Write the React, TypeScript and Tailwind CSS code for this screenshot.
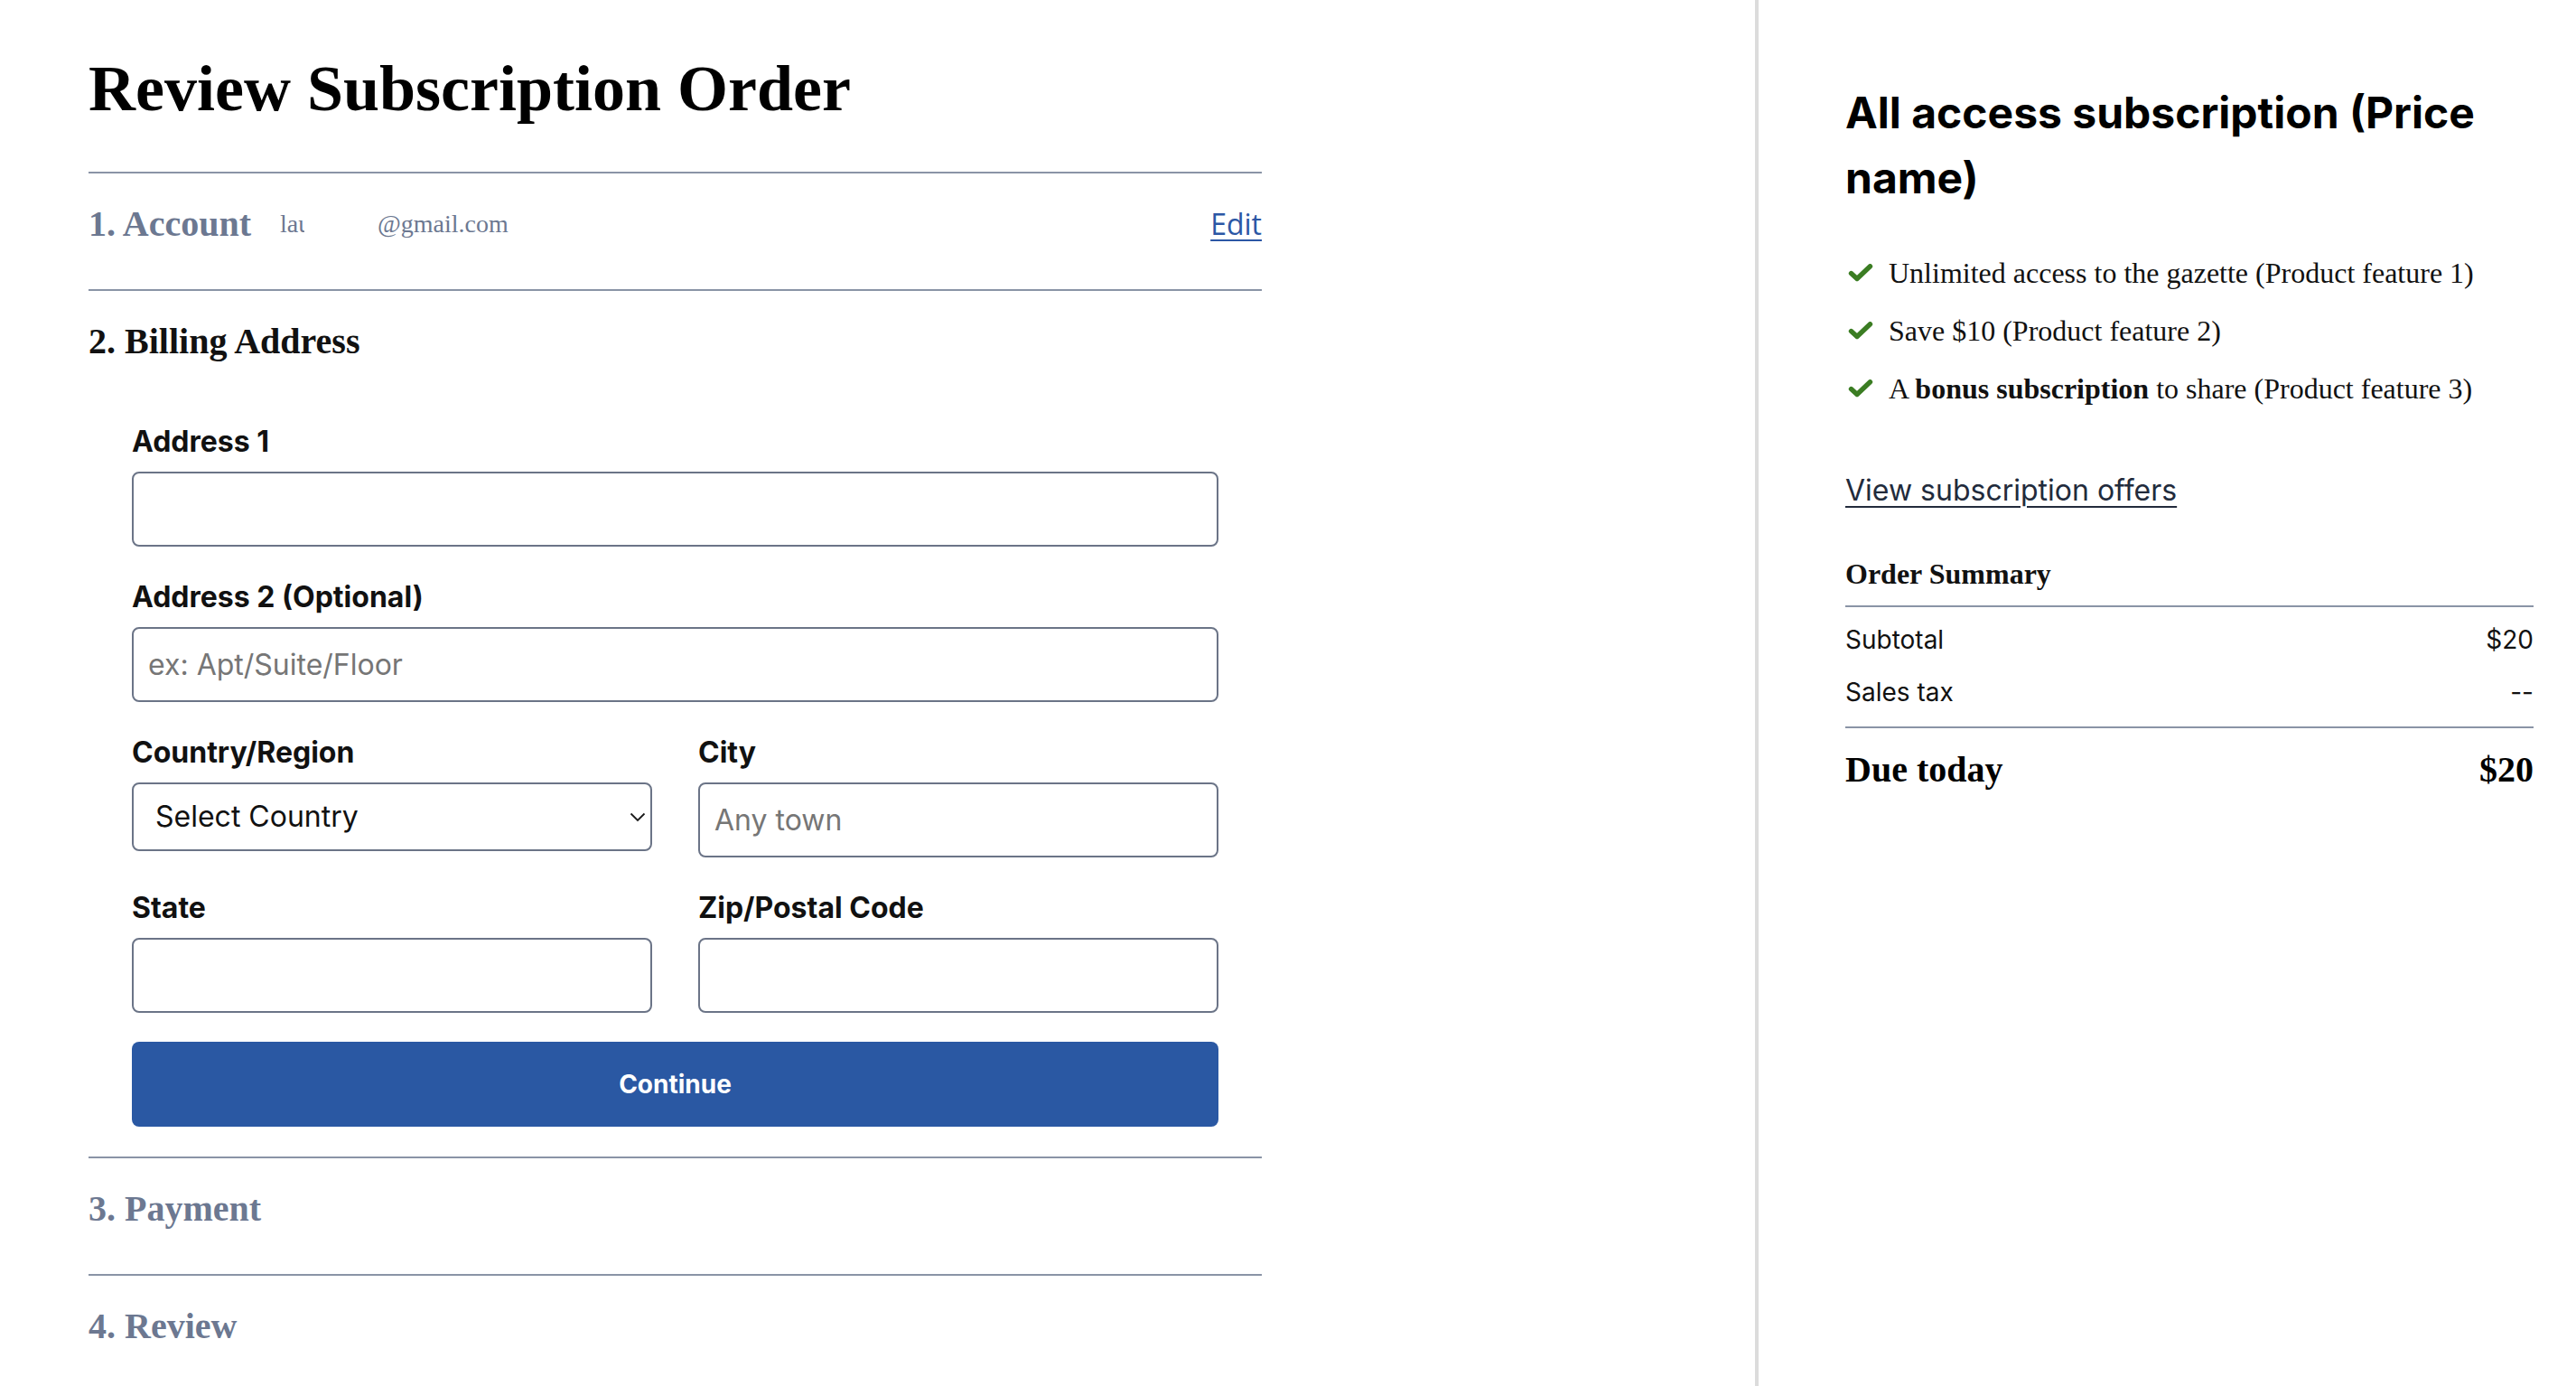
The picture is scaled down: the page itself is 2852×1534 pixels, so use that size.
import React from "react";

const serif = "font-['Liberation_Serif','Times_New_Roman',serif]";
const sans = "font-['Inter','Liberation_Sans',sans-serif]";

function Check() {
  return (
    <svg width="28" height="20" viewBox="0 0 28 20" className="ml-[3px] shrink-0">
      <polyline
        points="3.5,10.5 10,16.5 24.5,2.8"
        fill="none"
        stroke="#3b7d23"
        strokeWidth="5.4"
        strokeLinecap="round"
        strokeLinejoin="round"
      />
    </svg>
  );
}

function Label({ children }: { children: React.ReactNode }) {
  return (
    <label className={`block ${sans} text-[32px] leading-[48px] font-bold text-[#111] mb-[9px]`}>
      {children}
    </label>
  );
}

const inputCls = `block w-full h-[83px] rounded-[8px] border-2 border-[#6b7487] bg-white px-[16px] ${sans} text-[32px] text-[#111] placeholder:text-[#767676] outline-none`;

export default function App() {
  return (
    <div className="flex h-[1534px] w-full overflow-hidden bg-white text-[#111]">
      <main className="w-[1943px] shrink-0 pl-[98px]">
        <div className="w-[1299px]">
          <h1 className={`${serif} pt-[58px] text-[72px] leading-[80px] font-bold text-black`}>
            Review Subscription Order
          </h1>

          <section className="mt-[52px] flex items-center justify-between border-t-2 border-[#8a94a6] pt-[32px] pb-[48px]">
            <div className="flex items-center">
              <h2 className={`${serif} text-[40px] leading-[48px] font-bold text-[#6c7891]`}>1. Account</h2>
              <div className={`${serif} ml-[32px] flex items-center text-[28px] leading-[48px] text-[#6c7891]`}>
                <span className="inline-block w-[27px] overflow-hidden whitespace-nowrap">lau</span>
                <span className="ml-[81px]">@gmail.com</span>
              </div>
            </div>
            <a
              href="#"
              className="font-['Open_Sans','DejaVu_Sans',sans-serif] text-[32px] leading-[48px] text-[#2b57a5] underline decoration-[2px] underline-offset-[5px]"
            >
              Edit
            </a>
          </section>

          <section className="border-t-2 border-[#8a94a6] pt-[32px] pb-[33px]">
            <h2 className={`${serif} text-[40px] leading-[48px] font-bold text-[#111]`}>2. Billing Address</h2>
            <form className="mt-[63px] px-[48px]" onSubmit={(e) => e.preventDefault()}>
              <div>
                <Label>Address 1</Label>
                <input type="text" className={inputCls} />
              </div>
              <div className="mt-[32px]">
                <Label>Address 2 (Optional)</Label>
                <input type="text" placeholder="ex: Apt/Suite/Floor" className={inputCls} />
              </div>
              <div className="mt-[32px] grid grid-cols-2 items-start gap-x-[51px] gap-y-[32px]">
                <div>
                  <Label>Country/Region</Label>
                  <div className="relative">
                    <select
                      defaultValue=""
                      className={`block w-full h-[76px] appearance-none rounded-[8px] border-2 border-[#6b7487] bg-white pl-[24px] pr-[40px] ${sans} text-[32px] text-[#111] outline-none`}
                    >
                      <option value="">Select Country</option>
                      <option value="us">United States</option>
                      <option value="ca">Canada</option>
                    </select>
                    <svg
                      width="18"
                      height="11"
                      viewBox="0 0 18 11"
                      className="pointer-events-none absolute right-[7px] top-[33px]"
                    >
                      <polyline points="1.5,1.5 9,9 16.5,1.5" fill="none" stroke="#1a1a1a" strokeWidth="1.8" />
                    </svg>
                  </div>
                </div>
                <div>
                  <Label>City</Label>
                  <input type="text" placeholder="Any town" className={inputCls} />
                </div>
                <div>
                  <Label>State</Label>
                  <input type="text" className={inputCls} />
                </div>
                <div>
                  <Label>Zip/Postal Code</Label>
                  <input type="text" className={inputCls} />
                </div>
              </div>
              <button
                type="submit"
                className={`mt-[32px] flex h-[94px] w-full items-center justify-center rounded-[8px] bg-[#2a58a3] ${sans} text-[28px] font-bold text-white`}
              >
                Continue
              </button>
            </form>
          </section>

          <section className="border-t-2 border-[#8a94a6] pt-[32px] pb-[48px]">
            <h2 className={`${serif} text-[40px] leading-[48px] font-bold text-[#6c7891]`}>3. Payment</h2>
          </section>

          <section className="border-t-2 border-[#8a94a6] pt-[32px]">
            <h2 className={`${serif} text-[40px] leading-[48px] font-bold text-[#6c7891]`}>4. Review</h2>
          </section>
        </div>
      </main>

      <aside className="flex-1 border-l-4 border-[#dcdcdc] pl-[96px] pr-[47px]">
        <h2 className={`${sans} pt-[89px] text-[48px] leading-[72px] font-bold text-black`}>
          All access subscription (Price name)
        </h2>

        <ul className={`${serif} mt-[45px] flex flex-col gap-[16px] text-[32px] leading-[48px] text-[#111]`}>
          <li className="flex items-center gap-[17px]">
            <Check />
            <span>Unlimited access to the gazette (Product feature 1)</span>
          </li>
          <li className="flex items-center gap-[17px]">
            <Check />
            <span>Save $10 (Product feature 2)</span>
          </li>
          <li className="flex items-center gap-[17px]">
            <Check />
            <span>
              A <b className="font-bold">bonus subscription</b> to share (Product feature 3)
            </span>
          </li>
        </ul>

        <a
          href="#"
          className={`${sans} mt-[65px] inline-block text-[32px] leading-[48px] text-[#222b3c] underline decoration-[2px] underline-offset-[6px]`}
        >
          View subscription offers
        </a>

        <h3 className={`${serif} mt-[44px] text-[32px] leading-[48px] font-bold text-[#111]`}>Order Summary</h3>

        <div className={`${sans} mt-[11px] border-t-2 border-[#8a94a6] pt-[16px] pb-[18px] text-[28px] leading-[40px] text-[#111]`}>
          <div className="flex justify-between">
            <span>Subtotal</span>
            <span>$20</span>
          </div>
          <div className="mt-[18px] flex justify-between">
            <span>Sales tax</span>
            <span>--</span>
          </div>
        </div>

        <div className={`${serif} flex justify-between border-t-2 border-[#8a94a6] pt-[22px] text-[40px] leading-[48px] font-bold text-black`}>
          <span>Due today</span>
          <span>$20</span>
        </div>
      </aside>
    </div>
  );
}
